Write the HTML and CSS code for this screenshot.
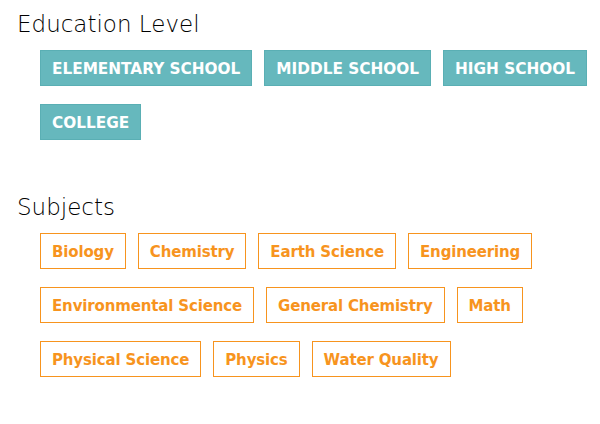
FILE: index.html
```html
<!DOCTYPE html>
<html>
<head>
<meta charset="utf-8">
<link rel="stylesheet" href="styles.css">
</head>
<body>
<section class="group">
  <h2 class="title">Education Level</h2>
  <div class="tags">
    <span class="tag level">ELEMENTARY SCHOOL</span>
    <span class="tag level">MIDDLE SCHOOL</span>
    <span class="tag level">HIGH SCHOOL</span>
    <span class="tag level">COLLEGE</span>
  </div>
</section>
<section class="group subjects">
  <h2 class="title">Subjects</h2>
  <div class="tags">
    <span class="tag subject">Biology</span>
    <span class="tag subject">Chemistry</span>
    <span class="tag subject">Earth Science</span>
    <span class="tag subject">Engineering</span>
    <span class="tag subject">Environmental Science</span>
    <span class="tag subject">General Chemistry</span>
    <span class="tag subject">Math</span>
    <span class="tag subject">Physical Science</span>
    <span class="tag subject">Physics</span>
    <span class="tag subject">Water Quality</span>
  </div>
</section>
</body>
</html>
```
FILE: styles.css
```css
html, body {
  margin: 0;
  padding: 0;
  background: #ffffff;
}
body {
  padding: 9px 0 0 17px;
  font-family: "DejaVu Sans", "Liberation Sans", sans-serif;
}
.group {
  margin: 0;
}
.subjects {
  margin-top: 52px;
}
.title {
  margin: 0;
  font-size: 23px;
  font-weight: 300;
  line-height: 30px;
  color: #000000;
  font-family: "DejaVu Sans", sans-serif;
}
.tags {
  display: flex;
  flex-wrap: wrap;
  column-gap: 12px;
  row-gap: 18px;
  padding: 11px 0 0 23px;
  width: 560px;
}
.tag {
  box-sizing: border-box;
  height: 36px;
  display: inline-flex;
  align-items: center;
  padding: 1px 11px 0;
  font-size: 15px;
}
.level {
  background: #66b8bd;
  border: 1px solid #5aafb4;
  color: #ffffff;
  font-weight: 700;
  font-size: 15.3px;
}
.subject {
  background: #ffffff;
  border: 1px solid #f7941e;
  color: #f7941e;
  font-weight: 600;
  letter-spacing: -0.15px;
}
```
